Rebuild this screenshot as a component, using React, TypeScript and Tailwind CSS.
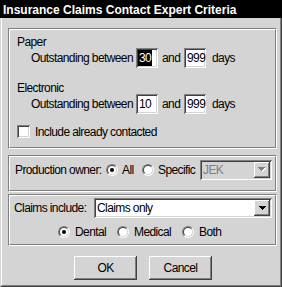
import React from "react";

const sunken =
  "shadow-[inset_1px_1px_0_#808080,inset_-1px_-1px_0_#ffffff,inset_2px_2px_0_#404040,inset_-2px_-2px_0_#d4d4d4]";
const raised =
  "shadow-[inset_-1px_-1px_0_#404040,inset_1px_1px_0_#ffffff,inset_-2px_-2px_0_#808080,inset_2px_2px_0_#d4d4d4]";

function Group({ className, children }: { className: string; children: React.ReactNode }) {
  return (
    <div
      className={`ml-[6px] w-[269px] shrink-0 border border-t-[#808080] border-l-[#808080] border-r-white border-b-white ${className}`}
    >
      <div className="h-full border border-t-white border-l-white border-r-[#808080] border-b-[#808080]">
        {children}
      </div>
    </div>
  );
}

function TextBox({ value, selected }: { value: string; selected?: boolean }) {
  return (
    <div className={`w-[22px] h-[20px] shrink-0 bg-white p-[2px] flex ${sunken}`}>
      {selected ? (
        <span className="bg-black text-white leading-[16px] px-[1px]">{value}</span>
      ) : (
        <span className="leading-[16px] pl-[1px]">{value}</span>
      )}
    </div>
  );
}

function Row({ a, b, selected }: { a: string; b: string; selected?: boolean }) {
  return (
    <div className="flex items-center h-[20px] pl-[14px]">
      <span className="w-[105px] shrink-0 leading-[14px] whitespace-nowrap">Outstanding between</span>
      <TextBox value={a} selected={selected} />
      <span className="ml-[4px] w-[22px] shrink-0 leading-[14px]">and</span>
      <TextBox value={b} />
      <span className="ml-[6px] leading-[14px]">days</span>
    </div>
  );
}

function Checkbox() {
  return <span className={`inline-block w-[13px] h-[13px] shrink-0 bg-white ${sunken}`} />;
}

function Radio({ checked }: { checked?: boolean }) {
  return (
    <span className="relative inline-block w-[12px] h-[12px] shrink-0 rounded-full border border-t-[#808080] border-l-[#808080] border-r-white border-b-white">
      <span className="absolute inset-0 rounded-full border border-t-[#404040] border-l-[#404040] border-r-[#d4d4d4] border-b-[#d4d4d4] bg-white" />
      {checked && (
        <span className="absolute left-[3px] top-[3px] w-[4px] h-[4px] rounded-full bg-black" />
      )}
    </span>
  );
}

const arrowPath = "M0 0h7v1h-1v1h-1v1h-1v1h-1v-1h-1v-1h-1v-1h-1z";

function DropButton({ disabled }: { disabled?: boolean }) {
  return (
    <span className={`w-[16px] h-[16px] shrink-0 bg-[#d4d4d4] flex items-center justify-center pb-[1px] ${raised}`}>
      {disabled ? (
        <svg width="8" height="5" viewBox="0 0 8 5" shapeRendering="crispEdges">
          <path d={arrowPath} fill="#ffffff" transform="translate(1 1)" />
          <path d={arrowPath} fill="#808080" />
        </svg>
      ) : (
        <svg width="7" height="4" viewBox="0 0 7 4" shapeRendering="crispEdges">
          <path d={arrowPath} fill="#000000" />
        </svg>
      )}
    </span>
  );
}

function Button({ label }: { label: string }) {
  return (
    <div
      className={`w-[63px] h-[24px] bg-[#d4d4d4] flex items-center justify-center pb-[1px] leading-[14px] ${raised}`}
    >
      {label}
    </div>
  );
}

export default function App() {
  return (
    <div className="w-[282px] h-[287px] bg-[#d4d4d4] flex flex-col overflow-hidden font-['Liberation_Sans',Arial,sans-serif] text-[12px] text-black tracking-[-0.6px]">
      <div className="h-[18px] shrink-0 bg-black text-white font-bold tracking-normal pl-[3px] pt-[3px] leading-[15px] whitespace-nowrap overflow-hidden">
        Insurance Claims Contact Expert Criteria
      </div>
      <div className="flex-1 border-l border-l-[#d4d4d4] border-r border-r-[#404040] border-b border-b-[#404040]">
        <div className="h-full flex flex-col border-l border-l-white border-r border-r-[#808080] border-b border-b-[#808080]">
          <Group className="mt-[10px] h-[121px]">
            <div className="pt-[6px] pl-[7px]">
              <div className="leading-[12px]">Paper</div>
              <Row a="30" b="999" selected />
              <div className="leading-[12px] mt-[14px]">Electronic</div>
              <Row a="10" b="999" />
              <div className="mt-[11px] flex items-center h-[13px]">
                <Checkbox />
                <span className="ml-[5px] leading-[14px] whitespace-nowrap">Include already contacted</span>
              </div>
            </div>
          </Group>

          <Group className="mt-[6px] h-[37px]">
            <div className="pt-[3px] pl-[5px] flex items-center h-[23px]">
              <span className="w-[91px] shrink-0 leading-[14px] whitespace-nowrap">Production owner:</span>
              <Radio checked />
              <span className="ml-[4px] w-[20px] shrink-0 leading-[14px]">All</span>
              <Radio />
              <span className="ml-[4px] w-[42px] shrink-0 leading-[14px]">Specific</span>
              <div className={`w-[72px] h-[20px] shrink-0 flex p-[2px] bg-[#d4d4d4] ${sunken}`}>
                <span className="flex-1 pl-[1px] leading-[16px] text-[#808080]">JEK</span>
                <DropButton disabled />
              </div>
            </div>
          </Group>

          <Group className="mt-[2px] h-[52px]">
            <div className="pt-[2px]">
              <div className="flex items-center h-[20px] pl-[4px]">
                <span className="w-[80px] shrink-0 leading-[14px] whitespace-nowrap">Claims include:</span>
                <div className={`w-[178px] h-[20px] shrink-0 flex p-[2px] bg-white ${sunken}`}>
                  <span className="flex-1 pl-[1px] leading-[16px]">Claims only</span>
                  <DropButton />
                </div>
              </div>
              <div className="mt-[8px] h-[12px] flex items-center pl-[48px]">
                <Radio checked />
                <span className="ml-[5px] w-[42px] shrink-0 leading-[14px]">Dental</span>
                <Radio />
                <span className="ml-[5px] w-[48px] shrink-0 leading-[14px]">Medical</span>
                <Radio />
                <span className="ml-[5px] leading-[14px]">Both</span>
              </div>
            </div>
          </Group>

          <div className="mt-[10px] flex gap-[12px] pl-[72px]">
            <Button label="OK" />
            <Button label="Cancel" />
          </div>
        </div>
      </div>
    </div>
  );
}
